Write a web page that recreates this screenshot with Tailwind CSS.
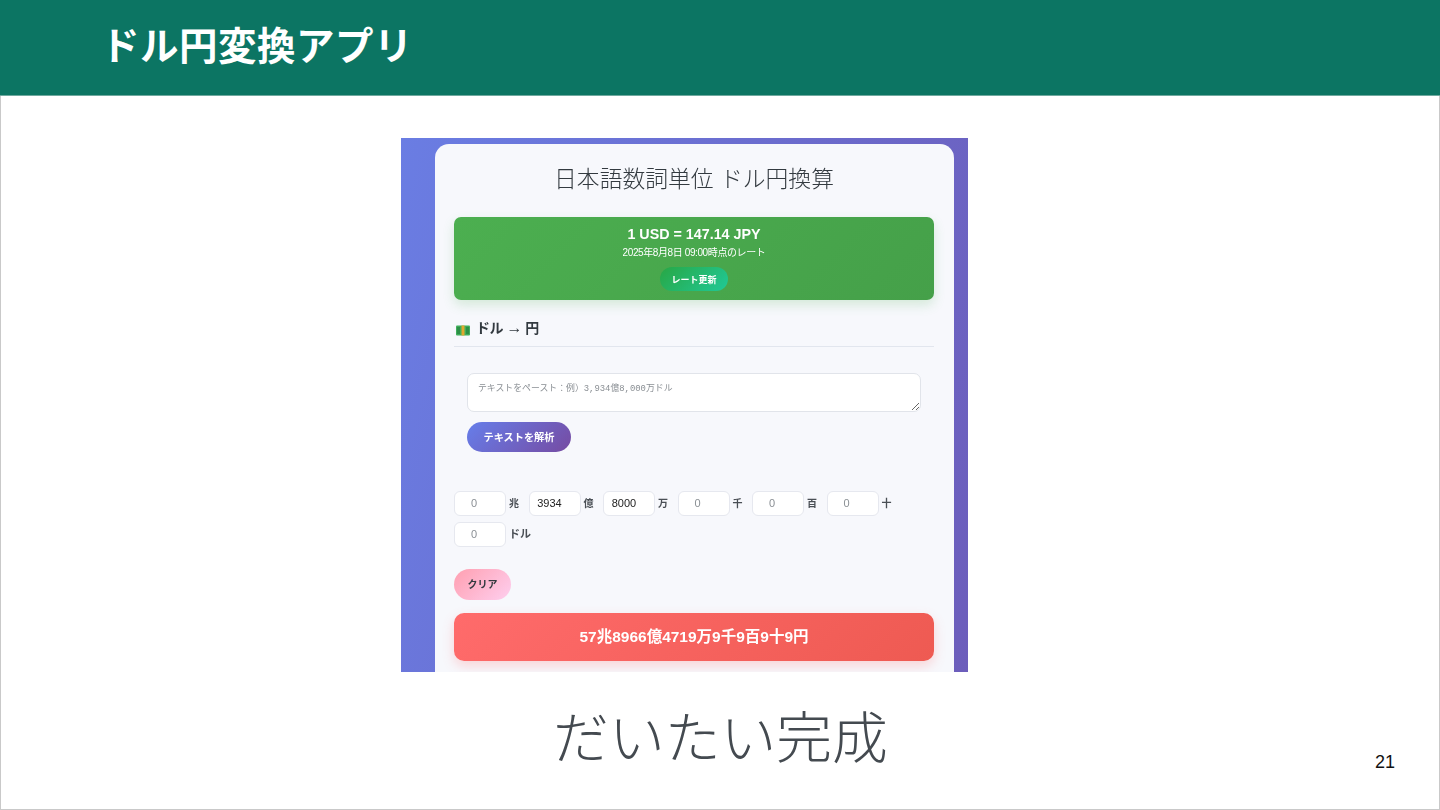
<!DOCTYPE html>
<html lang="ja">
<head>
<meta charset="utf-8">
<script src="https://cdn.jsdelivr.net/npm/@tailwindcss/browser@4"></script>
</head>
<body class="m-0 bg-white font-['Liberation_Sans','Noto_Sans_CJK_JP',sans-serif]">
<div class="w-[1440px] h-[810px] overflow-hidden flex flex-col">
  <header class="h-[96px] shrink-0 bg-[#0c7563] border-b border-[#6fa99f] flex items-center pl-[101px]">
    <h1 class="text-[38.5px] leading-none font-bold text-white tracking-[0.5px]">ドル円変換アプリ</h1>
  </header>
  <main class="flex-1 flex flex-col relative border border-t-0 border-[#c9c9c9]">
    <div class="mt-[42px] ml-[400px] w-[567px] h-[534px] overflow-hidden bg-[linear-gradient(105deg,#6a7de3,#6c5dbb)] px-[34px] pt-[6px] shrink-0">
      <div class="w-[519px] h-[600px] rounded-[14px] bg-[#f7f8fc] pl-[19px] pr-[20px] pt-[19px] blur-[0.5px]">
        <h2 class="mt-[1px] text-center text-[22.8px] leading-[30px] font-light text-[#333a40]">日本語数詞単位 ドル円換算</h2>
        <section class="mt-[23px] h-[83px] rounded-[7px] bg-[linear-gradient(135deg,#4caf50,#45a049)] shadow-[0_5px_12px_rgba(76,175,80,0.2)] flex flex-col items-center text-white">
          <p class="mt-[9px] text-[14.3px] leading-[17px] font-bold">1 USD = 147.14 JPY</p>
          <p class="mt-[3px] text-[10px] leading-[14px] tracking-[-0.4px]">2025年8月8日 09:00時点のレート</p>
          <button class="mt-[7px] h-[24px] w-[68px] rounded-full bg-[linear-gradient(135deg,#28a745,#20c997)] text-[9px] leading-[26px] font-bold text-white">レート更新</button>
        </section>
        <div class="mt-[20px] h-[27px] border-b border-[#e2e6ee] flex items-start gap-[6px] text-[14px] leading-[17px] font-bold text-[#333a40]">
          <svg class="mt-[5px] ml-[2px]" width="14" height="11" viewBox="0 0 14 11"><rect y="0.5" width="14" height="10" rx="1" fill="#3fae5a"/><rect x="5.5" y="0.5" width="3" height="10" fill="#e0a82e"/><rect x="1" y="2" width="3" height="7" fill="#2c8f46"/><rect x="10" y="2" width="3" height="7" fill="#2c8f46"/></svg>
          <span class="tracking-[-0.5px]">ドル <span class="font-normal text-[16px] leading-[16px]">→</span> 円</span>
        </div>
        <div class="mt-[26px] px-[13px]">
          <textarea readonly class="block w-[454px] h-[39px] rounded-[7px] border border-[#e1e4ea] bg-white px-[10px] py-[8px] font-['Liberation_Mono','Noto_Sans_CJK_JP',monospace] text-[8.9px] leading-[15px] outline-none placeholder:text-[#8a8f94]" placeholder="テキストをペースト：例）3,934億8,000万ドル"></textarea>
          <button class="mt-[10px] block w-[104px] h-[30px] rounded-full bg-[linear-gradient(135deg,#667eea,#764ba2)] pt-[1px] text-[10.2px] font-bold text-white">テキストを解析</button>
        </div>
        <div class="mt-[39px] w-[460px] flex flex-wrap gap-y-[6px] text-[10px] font-bold text-[#4a4f55]">
          <div class="flex items-center w-[74.5px]"><span class="w-[52px] h-[25px] rounded-[6px] border border-[#e6e8ef] bg-white flex items-center justify-center pr-[12px] text-[11px] text-[#8a8f94] font-normal">0</span><span class="ml-[3px]">兆</span></div>
          <div class="flex items-center w-[74.5px]"><span class="w-[52px] h-[25px] rounded-[6px] border border-[#e6e8ef] bg-white flex items-center justify-center pr-[10px] text-[11px] text-[#222] font-normal">3934</span><span class="ml-[3px]">億</span></div>
          <div class="flex items-center w-[74.5px]"><span class="w-[52px] h-[25px] rounded-[6px] border border-[#e6e8ef] bg-white flex items-center justify-center pr-[10px] text-[11px] text-[#222] font-normal">8000</span><span class="ml-[3px]">万</span></div>
          <div class="flex items-center w-[74.5px]"><span class="w-[52px] h-[25px] rounded-[6px] border border-[#e6e8ef] bg-white flex items-center justify-center pr-[12px] text-[11px] text-[#8a8f94] font-normal">0</span><span class="ml-[3px]">千</span></div>
          <div class="flex items-center w-[74.5px]"><span class="w-[52px] h-[25px] rounded-[6px] border border-[#e6e8ef] bg-white flex items-center justify-center pr-[12px] text-[11px] text-[#8a8f94] font-normal">0</span><span class="ml-[3px]">百</span></div>
          <div class="flex items-center w-[74.5px]"><span class="w-[52px] h-[25px] rounded-[6px] border border-[#e6e8ef] bg-white flex items-center justify-center pr-[12px] text-[11px] text-[#8a8f94] font-normal">0</span><span class="ml-[3px]">十</span></div>
          <div class="flex items-center w-[84px]"><span class="w-[52px] h-[25px] rounded-[6px] border border-[#e6e8ef] bg-white flex items-center justify-center pr-[12px] text-[11px] text-[#8a8f94] font-normal">0</span><span class="ml-[3px] text-[11px]">ドル</span></div>
        </div>
        <button class="mt-[22px] block w-[57px] h-[31px] rounded-full bg-[linear-gradient(135deg,#ff9fb0,#fecfef)] text-[10px] font-bold text-[#333a40]">クリア</button>
        <div class="mt-[13px] h-[48px] rounded-[10px] bg-[linear-gradient(135deg,#ff6b6b,#ee5a52)] shadow-[0_5px_12px_rgba(255,107,107,0.25)] flex items-center justify-center text-[15.5px] font-bold text-white">57兆8966億4719万9千9百9十9円</div>
      </div>
    </div>
    <p class="mt-[33px] ml-[1px] text-center text-[55.8px] leading-[68px] font-light text-[#444a50]">だいたい完成</p>
    <span class="absolute right-[44px] top-[655px] text-[18px] leading-[22px] text-[#111]">21</span>
  </main>
</div>
</body>
</html>
